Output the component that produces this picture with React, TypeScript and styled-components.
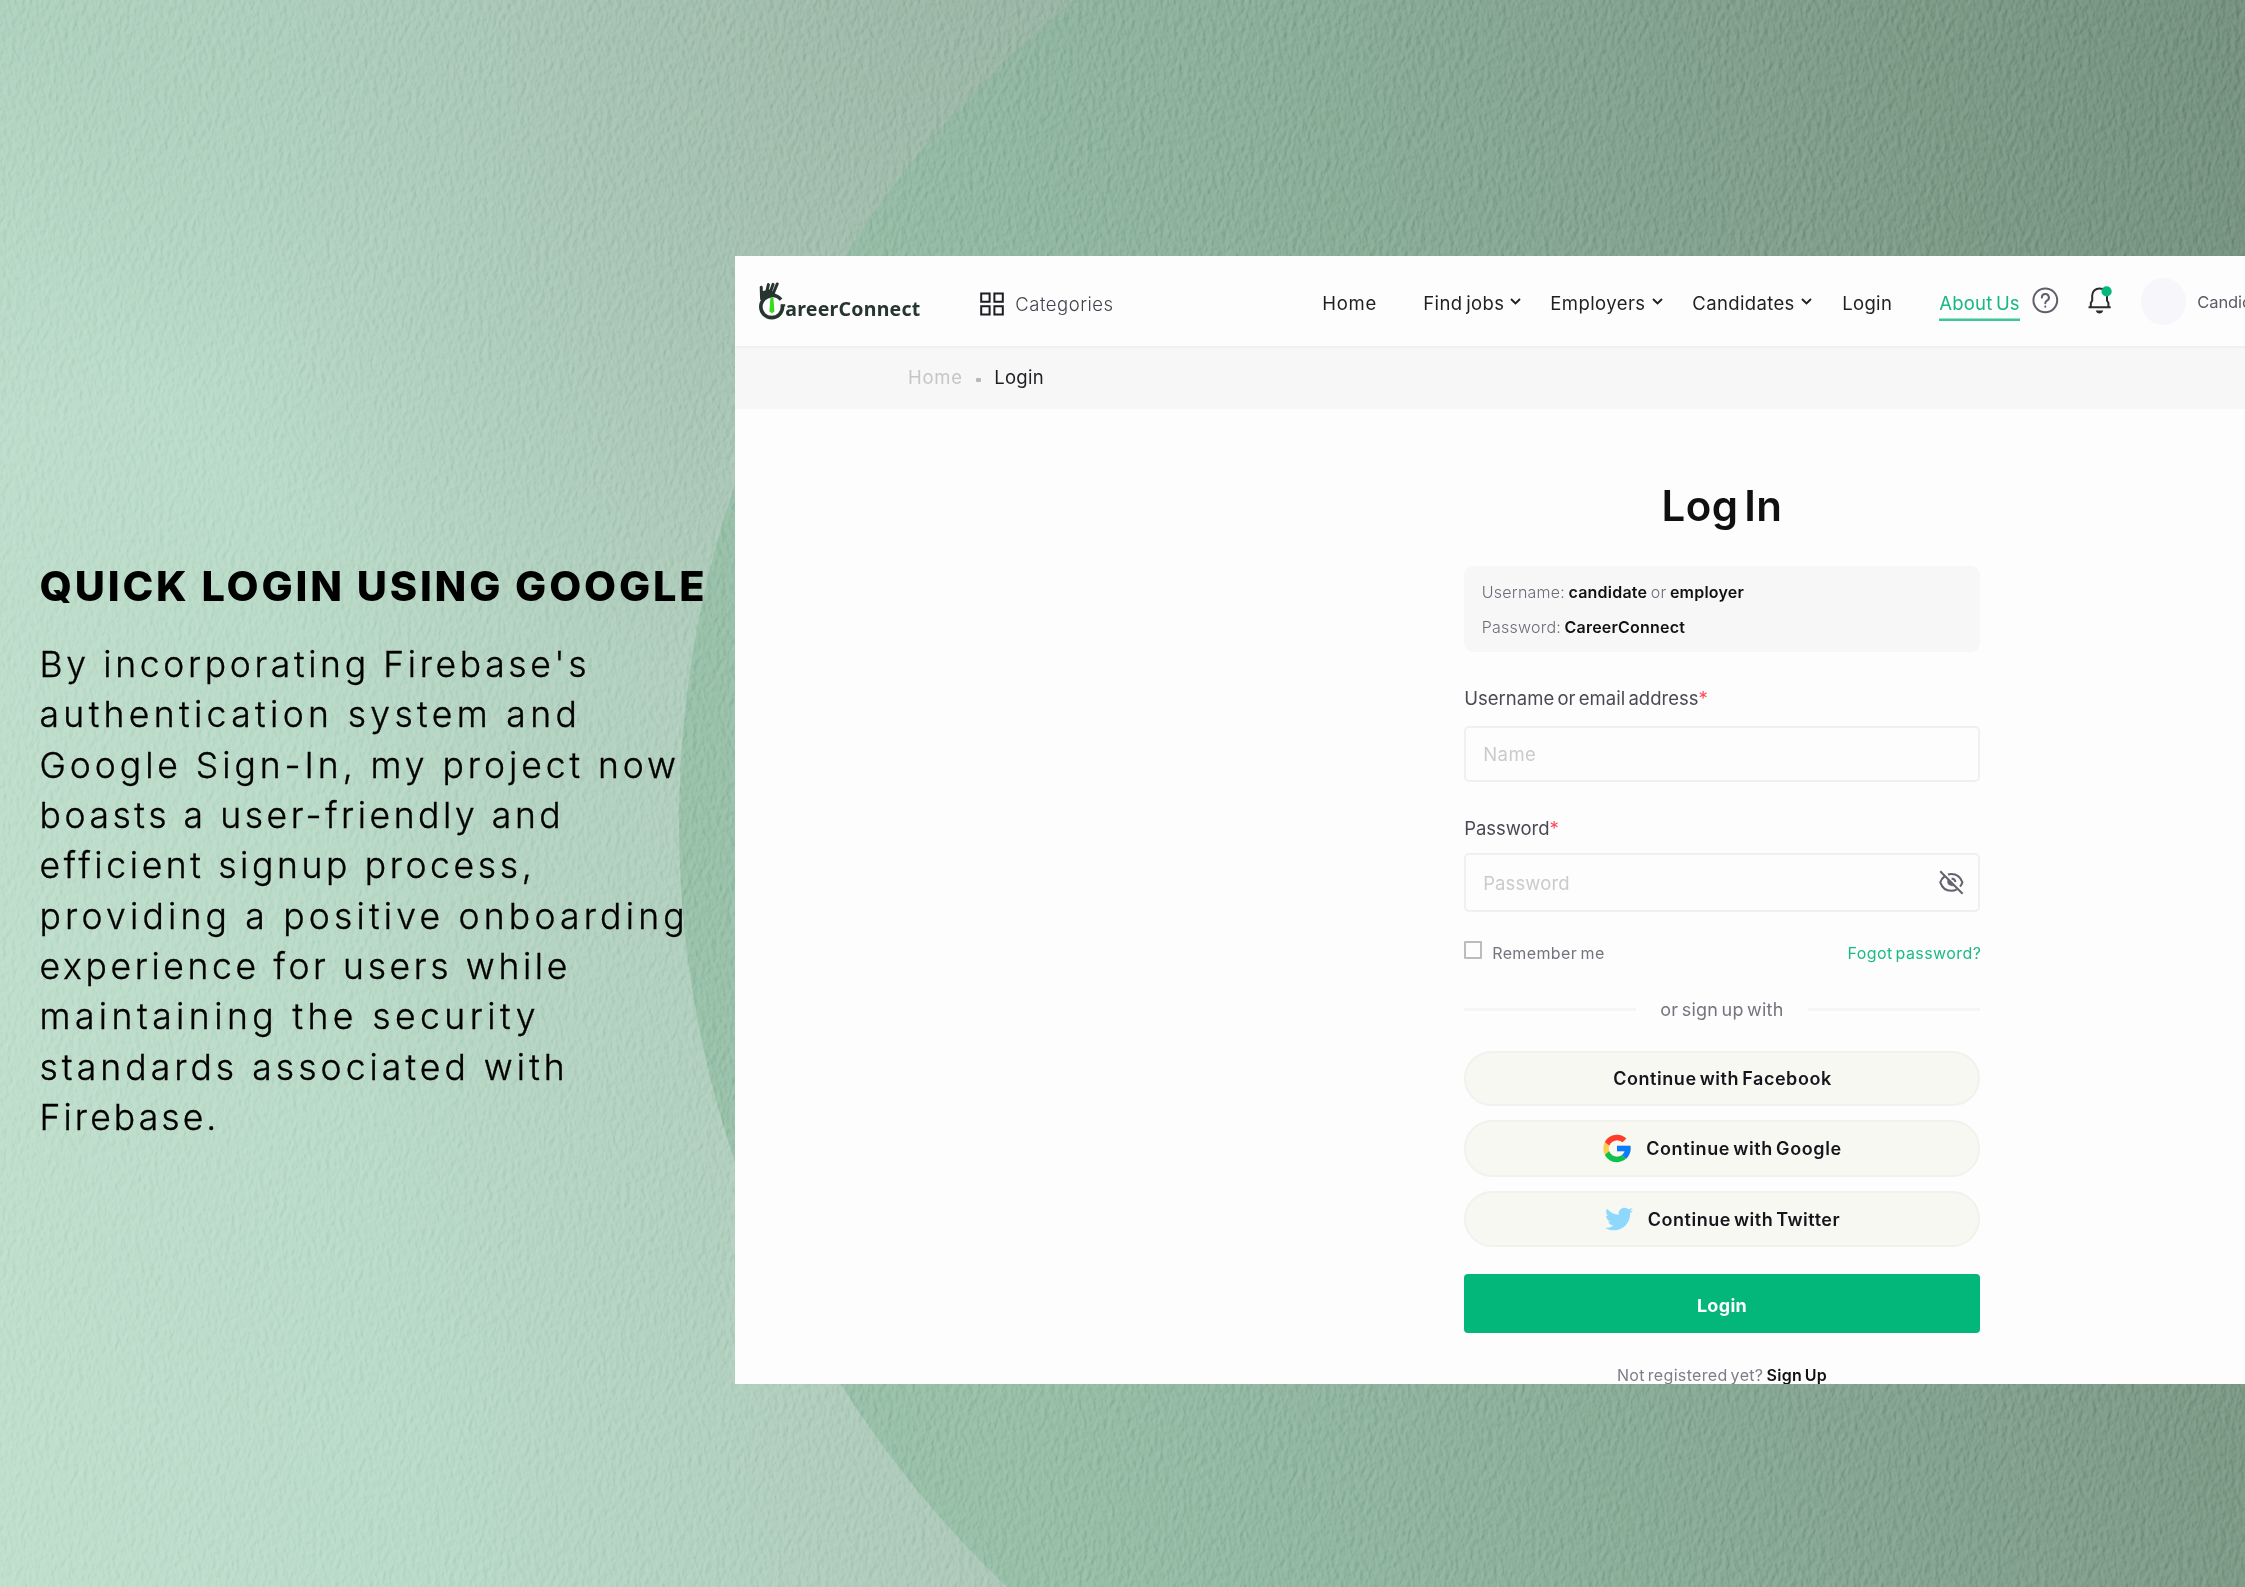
import React from "react";
import styled, { createGlobalStyle } from "styled-components";
import { FaTwitter } from "react-icons/fa";

const GlobalStyle = createGlobalStyle`
  * { box-sizing: border-box; }
  body { margin: 0; overflow: hidden; }
  input, button { font: inherit; letter-spacing: inherit; word-spacing: inherit; }
`;

const Slide = styled.main`
  position: relative;
  isolation: isolate;
  display: grid;
  grid-template-columns: 735px 1fr;
  width: 2245px;
  height: 1587px;
  overflow: hidden;
  font-family: Inter, "Liberation Sans", sans-serif;
  background:
    radial-gradient(ellipse 1150px 800px at 1100px -60px, rgba(140, 168, 150, 0.5), rgba(140, 168, 150, 0) 100%),
    radial-gradient(ellipse 500px 420px at 0 0, rgba(150, 190, 168, 0.35), rgba(150, 190, 168, 0) 100%),
    linear-gradient(82deg, #c1dfcd 0, #badac8 420px, #b3d1c0 720px, #adc8b8 1000px, #a5c0b0 1300px);
`;

const Disc = styled.div`
  position: absolute;
  z-index: -2;
  left: 679px;
  top: -231px;
  width: 2108px;
  height: 2108px;
  border-radius: 50%;
  background: linear-gradient(78deg, #9ac3ab 0, #98bfa8 420px, #92b6a1 700px, #8aad98 1000px, #84a390 1300px, #7d9a87 1600px, #728d7c 2108px);
`;

const Plaster = styled.svg`
  position: absolute;
  z-index: -1;
  inset: 0;
  width: 100%;
  height: 100%;
  mix-blend-mode: soft-light;
  opacity: 0.48;
`;

const Copy = styled.section`
  padding: 561px 0 0 39.5px;
`;

const Headline = styled.h1`
  margin: 0 0 29px;
  font-size: 41.5px;
  font-weight: 800;
  line-height: 50px;
  letter-spacing: 2.82px;
  white-space: nowrap;
  color: #000;
`;

const Paragraph = styled.p`
  margin: 0;
  font-size: 35.5px;
  font-weight: 300;
  line-height: 50.33px;
  color: #000;
  -webkit-text-stroke: 0.35px #000;
`;

const Line = styled.span<{ $track: number }>`
  display: block;
  white-space: nowrap;
  letter-spacing: ${(p) => p.$track}px;
`;

const Panel = styled.section`
  height: 1128.3px;
  margin-top: 256px;
  overflow: hidden;
  background: #fdfdfd;
`;

const Header = styled.header`
  display: grid;
  grid-template-columns: 221px 342px 101px 127px 142px 150px 97px 93px 56px 53px 56px 1fr;
  align-items: center;
  height: 92px;
  padding-left: 24.3px;
  border-bottom: 2px solid #f0f0f0;
`;

const Brand = styled.a`
  display: flex;
  align-items: flex-end;
  height: 38px;
`;

const BrandName = styled.span`
  margin: 0 0 -1px -1px;
  font: 700 19.5px/24px "Noto Sans", sans-serif;
  letter-spacing: 0.25px;
  color: #26352d;
`;

const Categories = styled.a`
  display: flex;
  align-items: center;
  gap: 11px;
  padding-top: 6px;
  font-size: 18.5px;
  font-weight: 300;
  letter-spacing: 0.5px;
  color: #44444e;
`;

const NavItem = styled.a<{ $track: number; $active?: boolean }>`
  display: flex;
  align-items: flex-start;
  justify-self: start;
  gap: 6px;
  height: 36px;
  margin-top: 4px;
  font-size: 18.5px;
  line-height: 36px;
  letter-spacing: ${(p) => p.$track}px;
  word-spacing: -2px;
  white-space: nowrap;
  color: ${(p) => (p.$active ? "#17b884" : "#1f1f24")};
  box-shadow: ${(p) => (p.$active ? "0 -2.5px 0 #3cc795 inset" : "none")};
`;

const IconSlot = styled.span`
  display: flex;
  height: 34px;
  align-items: center;
  margin-top: -2px;
`;

const Avatar = styled.span`
  width: 45px;
  height: 47px;
  border-radius: 50%;
  background: #f6f6fb;
`;

const Account = styled.span`
  padding-top: 1px;
  font-size: 16.5px;
  white-space: nowrap;
  letter-spacing: -0.1px;
  color: #5b5b68;
`;

const Crumbs = styled.nav`
  display: flex;
  align-items: center;
  height: 60.5px;
  padding: 0 0 2.5px 173px;
  background: #f7f7f7;
  font-size: 18.5px;
`;

const Crumb = styled.span<{ $current?: boolean }>`
  letter-spacing: ${(p) => (p.$current ? 0.3 : 0.7)}px;
  color: ${(p) => (p.$current ? "#1f1f24" : "#c6c6c6")};
`;

const CrumbDot = styled.span`
  width: 5px;
  height: 4px;
  margin: 6px 13.5px 0 13px;
  border-radius: 1px;
  background: #b9b9b9;
`;

const Form = styled.form`
  display: flex;
  flex-direction: column;
  width: 515.6px;
  margin-left: 729.2px;
  padding-top: 71px;
  font-size: 18.5px;
`;

const Title = styled.h2`
  margin: 0;
  text-align: center;
  font-size: 42px;
  font-weight: 600;
  line-height: 52px;
  letter-spacing: 0.4px;
  word-spacing: -5px;
  color: #101010;
`;

const Hint = styled.div`
  height: 86.3px;
  margin: 34.3px 0 34px;
  padding: 9px 0 0 17.6px;
  border-radius: 9px;
  background: #f7f7f7;
  font-size: 16px;
  font-weight: 300;
  line-height: 35.3px;
  letter-spacing: 0.22px;
  word-spacing: -1.2px;
  color: #6c6c78;
`;

const Strong = styled.b`
  font-weight: 600;
  color: #111;
`;

const Label = styled.label<{ $track: number }>`
  line-height: 24px;
  letter-spacing: ${(p) => p.$track}px;
  word-spacing: -2px;
  color: #4a4a54;
`;

const Required = styled.span`
  color: #ff4a5a;
`;

const Field = styled.div<{ $height: number; $top: number; $bottom: number }>`
  display: flex;
  align-items: center;
  height: ${(p) => p.$height}px;
  margin: ${(p) => p.$top}px 0 ${(p) => p.$bottom}px;
  padding: 0 14px 0 17px;
  border: 2px solid #f0f0f0;
  border-radius: 5px;
`;

const Input = styled.input<{ $track: number }>`
  flex: 1;
  min-width: 0;
  padding: 0;
  border: 0;
  outline: 0;
  background: transparent;
  letter-spacing: ${(p) => p.$track}px;
  &::placeholder { color: #cbcbcb; opacity: 1; }
`;

const Options = styled.div`
  display: flex;
  justify-content: space-between;
  height: 24px;
  font-size: 16px;
  line-height: 25px;
  white-space: nowrap;
`;

const Remember = styled.label`
  display: flex;
  letter-spacing: 0.38px;
  word-spacing: -1.5px;
  color: #74747f;
`;

const Box = styled.span`
  width: 18px;
  height: 18px;
  margin-right: 10px;
  border: 2px solid #bcbcbc;
  border-radius: 1px;
`;

const Forgot = styled.a`
  margin-right: -1.5px;
  letter-spacing: 0.42px;
  word-spacing: -2px;
  color: #1cba88;
`;

const Divider = styled.div`
  display: flex;
  align-items: center;
  justify-content: space-between;
  height: 24px;
  margin: 32.5px 0 29.2px;
  font-size: 18px;
  letter-spacing: 0.25px;
  word-spacing: -2px;
  color: #74747f;
  &::before, &::after {
    content: "";
    width: 171.5px;
    height: 3px;
    background: #f5f5f5;
  }
`;

const Social = styled.button<{ $height: number; $track: number }>`
  display: flex;
  align-items: center;
  justify-content: center;
  height: ${(p) => p.$height}px;
  margin: 0 0 14px;
  padding: 0 0 0 1px;
  border: 2px solid #f1f2ee;
  border-radius: 28px;
  background: #f7f8f2;
  font-size: 18px;
  font-weight: 600;
  letter-spacing: ${(p) => p.$track}px;
  word-spacing: -2px;
  color: #15151c;
`;

const SocialIcon = styled.span`
  display: flex;
  margin-right: 15px;
`;

const Submit = styled.button`
  height: 59.4px;
  margin: 13.3px 0 29.8px;
  padding: 3px 0 0;
  border: 0;
  border-radius: 4px;
  background: #03b67a;
  font-size: 18px;
  font-weight: 700;
  letter-spacing: 0.3px;
  color: #fff;
`;

const Register = styled.p`
  margin: 0;
  text-align: center;
  font-size: 16px;
  line-height: 24px;
  letter-spacing: 0.33px;
  word-spacing: -1.8px;
  color: #7d7d88;
`;

const LogoMark = () => (
  <svg width="27" height="38" viewBox="0 0 27 38" fill="none" stroke="#26352d" strokeLinecap="round">
    <path d="M2.2 5.2 2.6 17M9.4 2.6 7 13M14 2.4 10.6 12M18.2 2 13.8 12.4" strokeWidth="3" />
    <path d="M2.6 10 3 17 9 13.5 16 12.5 11 8Z" fill="#26352d" strokeWidth="1.5" />
    <path d="M22 17.6C19.6 14.6 16.4 13.2 12.6 13.6 6.4 14.2 1.8 18.8 1.8 24.6 1.8 31 6.6 35.6 12.6 35.6 18.8 35.6 23.6 31 23.6 24" strokeWidth="3.6" strokeLinecap="butt" />
    <path d="M21.6 23.3H26.2" strokeWidth="2.2" strokeLinecap="butt" />
    <path d="M11.4 15.6H14.4L15.4 29.4 13 31.2 10.4 29.4Z" fill="#35dc1b" stroke="none" />
  </svg>
);

const GridIcon = () => (
  <svg width="24" height="24" viewBox="0 0 24 24" fill="none" stroke="#1c1c22" strokeWidth="2">
    <path d="M1.2 1.5H9.6V9.7H1.2ZM14.4 1.5H22.8V9.7H14.4ZM1.2 14.3H9.6V22.5H1.2ZM14.4 14.3H22.8V22.5H14.4Z" />
  </svg>
);

const ChevronMark = styled.svg`
  margin-top: 13px;
`;

const Chevron = () => (
  <ChevronMark width="11" height="7" viewBox="0 0 11 7" fill="none" stroke="#1f1f24" strokeWidth="1.9">
    <path d="M1 1 5.5 5.4 10 1" />
  </ChevronMark>
);

const HelpIcon = () => (
  <svg width="27" height="27" viewBox="0 0 27 27" fill="none" stroke="#5e5e6c" strokeWidth="2" strokeLinecap="round">
    <circle cx="13.3" cy="13.3" r="11.9" />
    <path d="M9.9 10.6A3.5 3.5 0 1 1 15 13.6C13.8 14.3 13.3 14.9 13.3 16.2M13.3 19.6V19.7" />
  </svg>
);

const BellIcon = () => (
  <svg width="26" height="29" viewBox="0 0 26 29" fill="none" stroke="#2b2b30" strokeWidth="2">
    <path d="M.5 21.2H22.7M2.8 21V17L4.2 14.5V9.6C4.2 5.4 7.2 2.4 11.6 2.4S19 5.4 19 9.6V14.5L20.4 17V21" />
    <path d="M7.8 24.6H15.2C14.8 26.6 13.4 27.6 11.5 27.6S8.2 26.6 7.8 24.6Z" fill="#2b2b30" stroke="none" />
    <circle cx="18.6" cy="5.4" r="5.1" fill="#06b77b" stroke="none" />
  </svg>
);

const EyeOffIcon = () => (
  <svg width="25" height="25" viewBox="0 0 25 25" fill="none" stroke="#62626e" strokeWidth="2">
    <path d="M1.2 1.2 23.6 23.8" />
    <path d="M5.6 6.4C3.6 7.8 2.1 9.8 1.3 12.4 3 17.6 7.2 20.8 12.3 20.8 14.4 20.8 16.2 20.3 17.8 19.4M9 4.5C10 4.2 11.2 4 12.3 4 17.4 4 21.6 7.2 23.4 12.4 22.9 14 22.1 15.4 21 16.6" />
    <path d="M8.6 9.6C7.4 13.6 9.6 16.4 14.8 16.2Z" fill="#62626e" stroke="none" />
    <path d="M12.6 8.4C14.8 8.6 16.2 10 16.4 12" />
  </svg>
);

const GoogleIcon = () => (
  <svg width="28" height="29" viewBox="3.5 3.5 41 41">
    <path fill="#ffcc4d" d="M43.6 20H24v8h11.3C33.7 32.7 29.2 36 24 36c-6.6 0-12-5.4-12-12s5.4-12 12-12c3.1 0 5.8 1.2 8 3l5.7-5.6C34 6.1 29.3 4 24 4 12.9 4 4 12.9 4 24s8.9 20 20 20 20-8.9 20-20c0-1.3-.1-2.7-.4-4z" />
    <path fill="#ff3b30" d="M6.3 14.7l6.6 4.8C14.7 15.1 19 12 24 12c3.1 0 5.8 1.2 8 3l5.7-5.6C34 6.1 29.3 4 24 4 16.3 4 9.7 8.3 6.3 14.7z" />
    <path fill="#0ac251" d="M24 44c5.2 0 9.9-2 13.4-5.2l-6.2-5.2C29.2 35.1 26.7 36 24 36c-5.2 0-9.6-3.3-11.3-7.9l-6.5 5C9.5 39.6 16.2 44 24 44z" />
    <path fill="#0a7cff" d="M43.6 20H24v8h11.3c-.8 2.2-2.2 4.2-4.1 5.6l6.2 5.2C37 39.2 44 34 44 24c0-1.3-.1-2.7-.4-4z" />
  </svg>
);

const copyLines: [string, number][] = [
  ["By incorporating Firebase's", 3.65],
  ["authentication system and", 4.36],
  ["Google Sign-In, my project now", 3.94],
  ["boasts a user-friendly and", 3.56],
  ["efficient signup process,", 3.62],
  ["providing a positive onboarding", 4.2],
  ["experience for users while", 3.64],
  ["maintaining the security", 4.44],
  ["standards associated with", 4.05],
  ["Firebase.", 3.1],
];

const navItems = [
  { text: "Home", track: 0.7 },
  { text: "Find jobs", track: 0.4, menu: true },
  { text: "Employers", track: 0.42, menu: true },
  { text: "Candidates", track: 0.36, menu: true },
  { text: "Login", track: 0.3 },
  { text: "About Us", track: 0.2, active: true },
];

export default function App() {
  return (
    <>
      <GlobalStyle />
      <Slide>
        <Disc />
        <Plaster aria-hidden="true">
          <filter id="plaster" x="0" y="0" width="100%" height="100%" colorInterpolationFilters="sRGB">
            <feTurbulence type="fractalNoise" baseFrequency="0.21 0.12" numOctaves={4} seed={21} />
            <feColorMatrix values="0 0 0 0 0  0 0 0 0 0  0 0 0 0 0  1 0 0 0 0" />
            <feDiffuseLighting surfaceScale={1.5} diffuseConstant={0.72} lightingColor="#fff">
              <feDistantLight azimuth={205} elevation={45} />
            </feDiffuseLighting>
          </filter>
          <rect width="100%" height="100%" filter="url(#plaster)" />
        </Plaster>

        <Copy>
          <Headline>QUICK LOGIN USING GOOGLE</Headline>
          <Paragraph>
            {copyLines.map(([text, track]) => (
              <Line key={text} $track={track}>{text}</Line>
            ))}
          </Paragraph>
        </Copy>

        <Panel>
          <Header>
            <Brand>
              <LogoMark />
              <BrandName>areerConnect</BrandName>
            </Brand>
            <Categories>
              <GridIcon />
              Categories
            </Categories>
            {navItems.map((item) => (
              <NavItem key={item.text} $track={item.track} $active={item.active}>
                {item.text}
                {item.menu && <Chevron />}
              </NavItem>
            ))}
            <IconSlot><HelpIcon /></IconSlot>
            <IconSlot><BellIcon /></IconSlot>
            <Avatar />
            <Account>Candidate</Account>
          </Header>

          <Crumbs>
            <Crumb>Home</Crumb>
            <CrumbDot />
            <Crumb $current>Login</Crumb>
          </Crumbs>

          <Form>
            <Title>Log In</Title>
            <Hint>
              <div>Username: <Strong>candidate</Strong> or <Strong>employer</Strong></div>
              <div>Password: <Strong>CareerConnect</Strong></div>
            </Hint>

            <Label $track={0.02}>Username or email address<Required>*</Required></Label>
            <Field $height={56.4} $top={15.7} $bottom={33.6}>
              <Input $track={0.45} placeholder="Name" />
            </Field>

            <Label $track={-0.05}>Password<Required>*</Required></Label>
            <Field $height={58.7} $top={13.7} $bottom={29.3}>
              <Input $track={0.1} placeholder="Password" />
              <EyeOffIcon />
            </Field>

            <Options>
              <Remember><Box />Remember me</Remember>
              <Forgot>Fogot password?</Forgot>
            </Options>

            <Divider>or sign up with</Divider>

            <Social type="button" $height={55.3} $track={0.55}>Continue with Facebook</Social>
            <Social type="button" $height={57} $track={0.62}>
              <SocialIcon><GoogleIcon /></SocialIcon>
              Continue with Google
            </Social>
            <Social type="button" $height={55.3} $track={0.51}>
              <SocialIcon><FaTwitter size={28} color="#8ed7fd" /></SocialIcon>
              Continue with Twitter
            </Social>

            <Submit type="button">Login</Submit>
            <Register>Not registered yet? <Strong>Sign Up</Strong></Register>
          </Form>
        </Panel>
      </Slide>
    </>
  );
}
